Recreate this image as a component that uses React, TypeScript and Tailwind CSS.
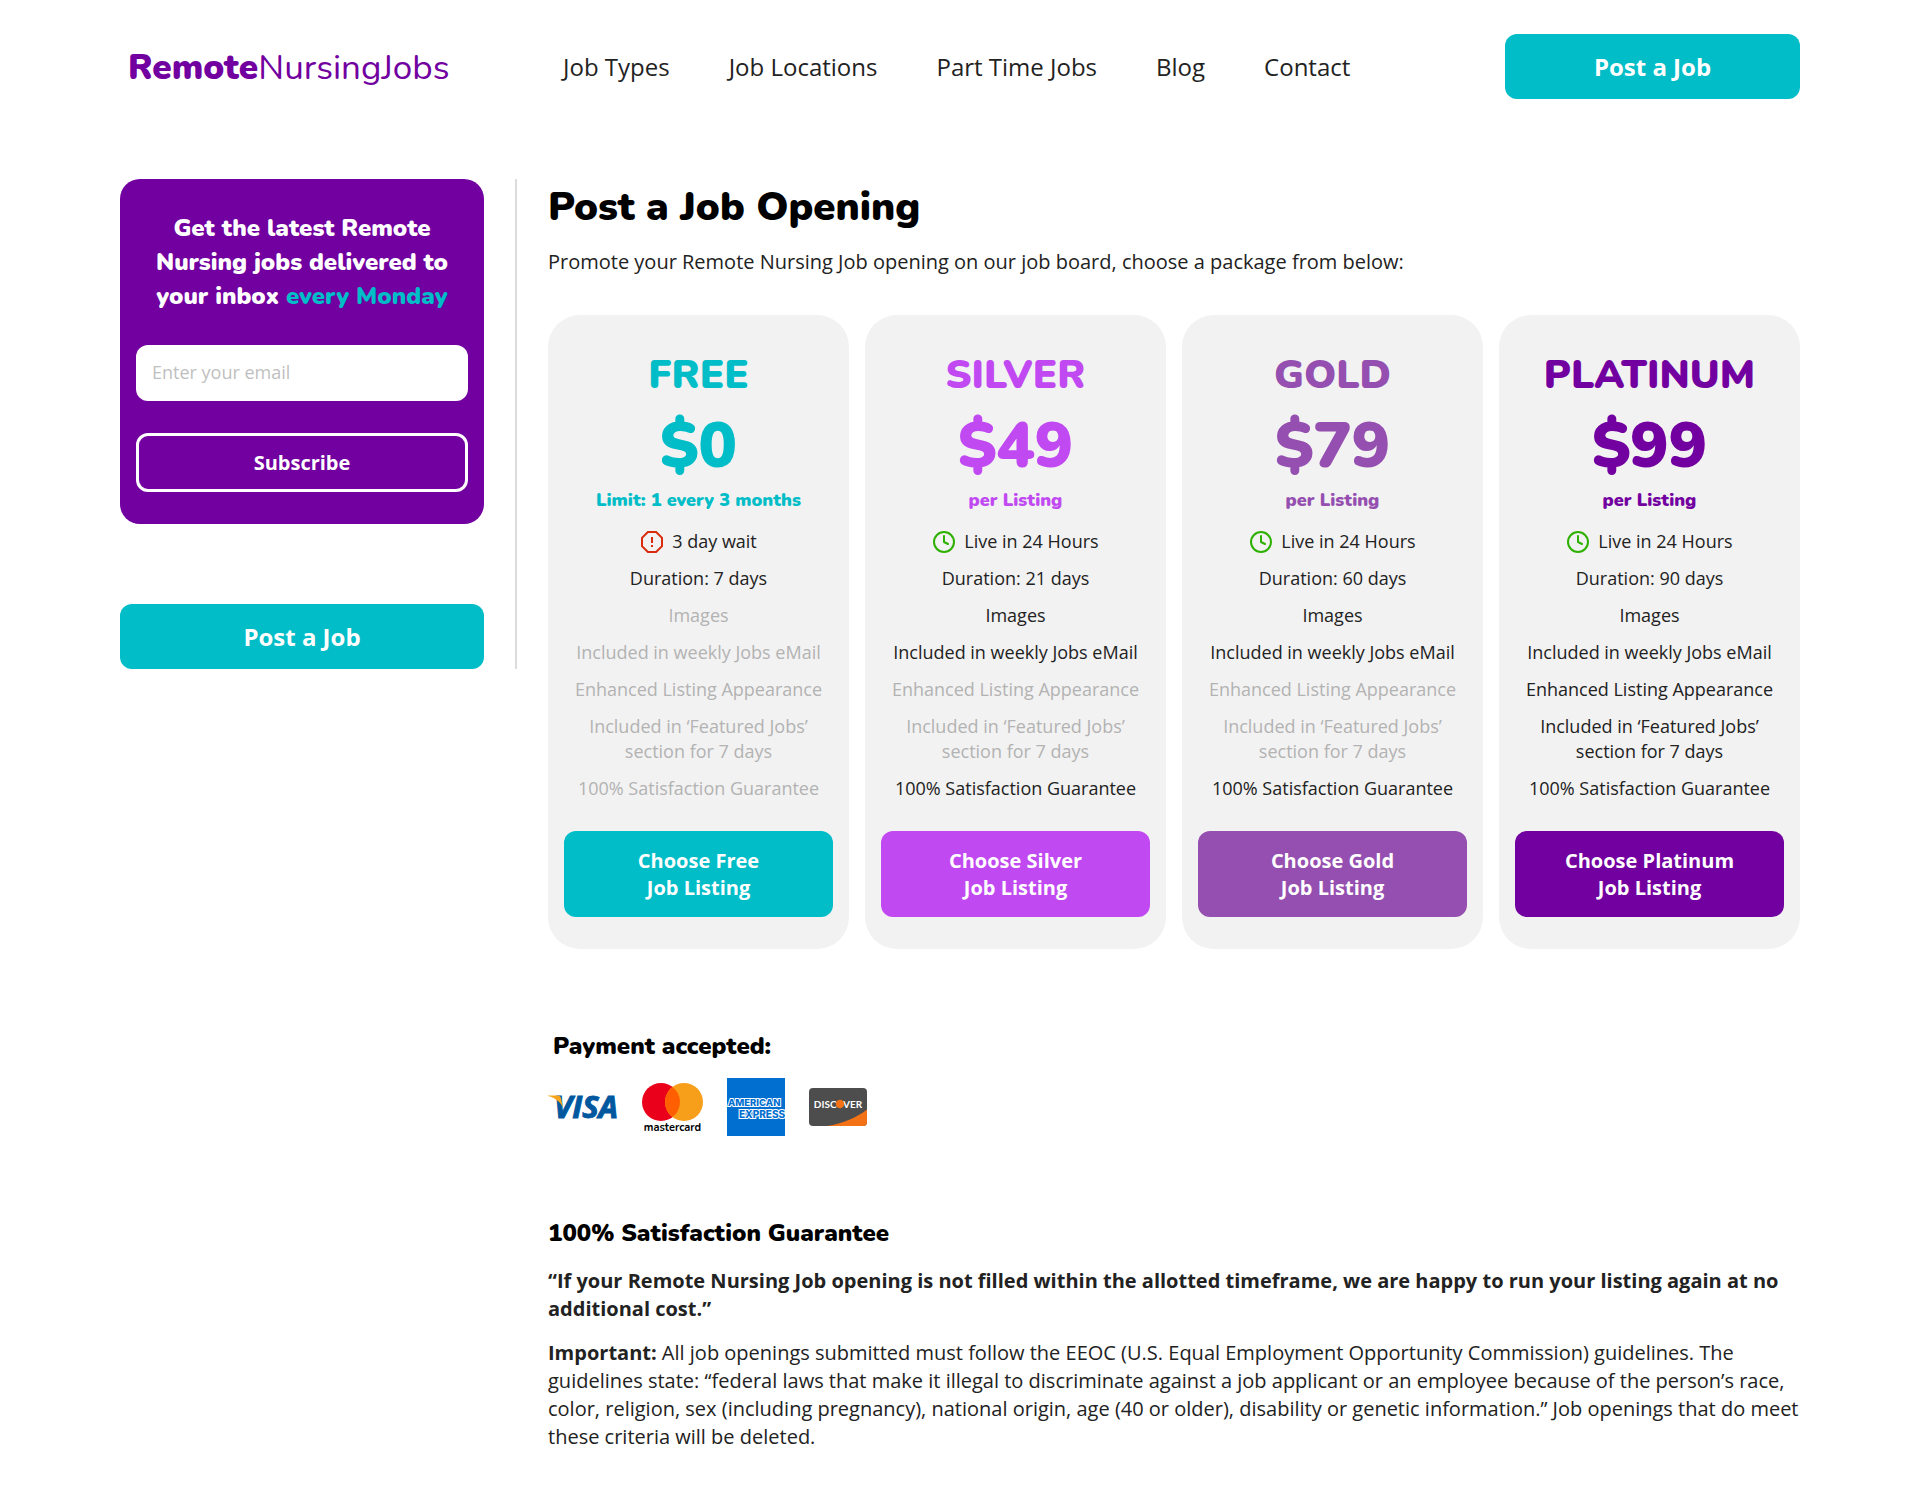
import { Clock } from 'lucide-react';
import clsx from 'clsx';

interface Feature {
  label: string;
  included: boolean;
}

interface Plan {
  name: string;
  price: string;
  note: string;
  wait?: boolean;
  speed: string;
  features: Feature[];
  cta: string;
  textColor: string;
  bgColor: string;
}

const navLinks = ['Job Types', 'Job Locations', 'Part Time Jobs', 'Blog', 'Contact'];

const buildFeatures = (days: number, images: boolean, email: boolean, enhanced: boolean, featured: boolean, guarantee: boolean): Feature[] => [
  { label: `Duration: ${days} days`, included: true },
  { label: 'Images', included: images },
  { label: 'Included in weekly Jobs eMail', included: email },
  { label: 'Enhanced Listing Appearance', included: enhanced },
  { label: 'Included in ‘Featured Jobs’ section for 7 days', included: featured },
  { label: '100% Satisfaction Guarantee', included: guarantee },
];

const plans: Plan[] = [
  {
    name: 'FREE',
    price: '$0',
    note: 'Limit: 1 every 3 months',
    wait: true,
    speed: '3 day wait',
    features: buildFeatures(7, false, false, false, false, false),
    cta: 'Choose Free',
    textColor: 'text-[#00bdc7]',
    bgColor: 'bg-[#00bdc7]',
  },
  {
    name: 'SILVER',
    price: '$49',
    note: 'per Listing',
    speed: 'Live in 24 Hours',
    features: buildFeatures(21, true, true, false, false, true),
    cta: 'Choose Silver',
    textColor: 'text-[#c149f2]',
    bgColor: 'bg-[#c149f2]',
  },
  {
    name: 'GOLD',
    price: '$79',
    note: 'per Listing',
    speed: 'Live in 24 Hours',
    features: buildFeatures(60, true, true, false, false, true),
    cta: 'Choose Gold',
    textColor: 'text-[#954fb0]',
    bgColor: 'bg-[#954fb0]',
  },
  {
    name: 'PLATINUM',
    price: '$99',
    note: 'per Listing',
    speed: 'Live in 24 Hours',
    features: buildFeatures(90, true, true, true, true, true),
    cta: 'Choose Platinum',
    textColor: 'text-[#7200a0]',
    bgColor: 'bg-[#7200a0]',
  },
];

function WaitIcon() {
  return (
    <svg width="24" height="24" viewBox="0 0 24 24" fill="none" stroke="#d92b0b" strokeWidth="2" aria-hidden="true">
      <path d="M7.9 2h8.2L22 7.9v8.2L16.1 22H7.9L2 16.1V7.9z" />
      <path d="M12 7v6M12 15v2" />
    </svg>
  );
}

function PostJobLink() {
  return (
    <a href="#post" className="block rounded-xl bg-[#00bdc7] py-4 text-center text-2xl leading-[33px] font-bold text-white">
      Post a Job
    </a>
  );
}

function PlanCard({ plan }: { plan: Plan }) {
  return (
    <article className="flex flex-col rounded-[32px] bg-[#f2f2f2] px-4 pt-9 pb-8 text-center">
      <div className={clsx('font-[Nunito,sans-serif] font-black', plan.textColor)}>
        <h2 className="text-[40px] leading-[48px]">{plan.name}</h2>
        <p className="mt-[15px] text-[64px] leading-[64px]">{plan.price}</p>
        <p className="mt-[10px] text-lg leading-6">{plan.note}</p>
      </div>
      <ul className="mt-[17px] flex flex-col gap-3 text-lg leading-[25px]">
        <li className="flex items-center justify-center gap-2">
          {plan.wait ? <WaitIcon /> : <Clock className="h-6 w-6 text-[#2eb000]" />}
          {plan.speed}
        </li>
        {plan.features.map((feature) => (
          <li key={feature.label} className={clsx(!feature.included && 'text-[#b3b3b3]')}>
            {feature.label}
          </li>
        ))}
      </ul>
      <a href="#choose" className={clsx('mt-[30px] block rounded-xl py-4 text-xl leading-[27px] font-bold text-white', plan.bgColor)}>
        {plan.cta}
        <br />
        Job Listing
      </a>
    </article>
  );
}

function PaymentLogos() {
  return (
    <div className="mt-4 flex items-center gap-6">
      <svg width="70" height="26" viewBox="0 0 70 26" className="overflow-visible" role="img" aria-label="Visa">
        <text x="6" y="24" fill="#00589f" stroke="#00589f" strokeWidth="1" fontFamily="Open Sans, sans-serif" fontSize="31" fontStyle="italic" fontWeight="700">VISA</text>
        <path d="M0 1.500h9.500c1.800 0 2.900.7 3.400 2.400l2.200 10C12.800 8.500 8 4 0 2z" fill="#f9a51a" />
      </svg>

      <svg width="61" height="50" viewBox="0 0 61 50" className="overflow-visible" role="img" aria-label="Mastercard">
        <circle cx="19" cy="20" r="19" fill="#eb001b" />
        <circle cx="42" cy="20" r="19" fill="#f79e1b" />
        <path d="M30.5 4.900a19 19 0 0 1 0 30.200a19 19 0 0 1 0-30.200z" fill="#ff5f00" />
        <text x="30.5" y="49" textAnchor="middle" fill="#000" fontFamily="Nunito, sans-serif" fontSize="11" fontWeight="700">mastercard</text>
      </svg>

      <svg width="58" height="58" viewBox="0 0 58 58" role="img" aria-label="American Express">
        <rect width="58" height="58" fill="#016fd0" />
        <g fill="#016fd0" stroke="#fff" strokeWidth="2" paintOrder="stroke" fontFamily="Inter, sans-serif" fontWeight="800">
          <text x="1" y="28" fontSize="9.5">AMERICAN</text>
          <text x="12" y="40" fontSize="10">EXPRESS</text>
        </g>
      </svg>

      <svg width="58" height="38" viewBox="0 0 58 38" role="img" aria-label="Discover">
        <defs>
          <clipPath id="discover-card">
            <rect width="58" height="38" rx="4" />
          </clipPath>
        </defs>
        <g clipPath="url(#discover-card)">
          <rect width="58" height="38" fill="#4d4d4d" />
          <path d="M58 21.5C48 29.5 34 35.5 18 38h40z" fill="#f47216" />
        </g>
        <g fill="#fff" fontFamily="Lato, sans-serif" fontSize="10" fontWeight="700">
          <text x="27.5" y="20" textAnchor="end">DISC</text>
          <text x="34" y="20">VER</text>
        </g>
        <circle cx="31" cy="16" r="4.2" fill="#f47216" />
      </svg>
    </div>
  );
}

export default function App() {
  return (
    <div className="min-h-screen bg-white px-[120px] pb-10 font-['Open_Sans',sans-serif] text-[#222]">
      <header className="grid grid-cols-[428px_1fr_295px] items-center pt-[34px]">
        <a href="#home" className="pt-0.5 pl-2 font-[Nunito,sans-serif] text-[35px] leading-[48px] text-[#7200a0]">
          <span className="font-black">Remote</span>NursingJobs
        </a>
        <nav className="flex gap-[59px] pl-[15px] text-2xl leading-8">
          {navLinks.map((link) => (
            <a key={link} href="#nav" className="whitespace-nowrap">
              {link}
            </a>
          ))}
        </nav>
        <PostJobLink />
      </header>

      <div className="mt-20 flex items-start">
        <aside className="w-[397px] shrink-0 border-r-2 border-[#dcdcdc] pr-[31px]">
          <form className="rounded-[20px] bg-[#7200a0] px-4 pt-8 pb-8" onSubmit={(e) => e.preventDefault()}>
            <h2 className="text-center font-[Nunito,sans-serif] text-2xl leading-[34px] font-black text-white">
              Get the latest Remote
              <br />
              Nursing jobs delivered to
              <br />
              your inbox <span className="text-[#00bdc7]">every Monday</span>
            </h2>
            <input
              type="email"
              aria-label="Enter your email"
              placeholder="Enter your email"
              className="mt-8 block h-14 w-full rounded-xl bg-white px-4 pb-0.5 text-lg placeholder:text-[#bfbfbf]"
            />
            <button type="submit" className="mt-8 block w-full rounded-xl border-3 border-white py-[13px] text-xl leading-[27px] font-bold text-white">
              Subscribe
            </button>
          </form>
          <div className="mt-20">
            <PostJobLink />
          </div>
        </aside>

        <main className="flex-1 pt-1 pl-[31px]">
          <h1 className="font-[Nunito,sans-serif] text-[40px] leading-[48px] font-black text-black">Post a Job Opening</h1>
          <p className="mt-[17px] text-xl leading-7">Promote your Remote Nursing Job opening on our job board, choose a package from below:</p>

          <section className="mt-[39px] grid grid-cols-4 gap-4">
            {plans.map((plan) => (
              <PlanCard key={plan.name} plan={plan} />
            ))}
          </section>

          <section className="mt-[81px]">
            <h2 className="pl-[5px] font-[Nunito,sans-serif] text-2xl leading-8 font-black text-black">Payment accepted:</h2>
            <PaymentLogos />
          </section>

          <section className="mt-[81px] text-xl leading-7">
            <h2 className="font-[Nunito,sans-serif] text-2xl leading-8 font-black text-black">100% Satisfaction Guarantee</h2>
            <p className="mt-[18px] font-bold">
              “If your Remote Nursing Job opening is not filled within the allotted timeframe, we are happy to run your listing again at no additional cost.”
            </p>
            <p className="mt-4">
              <strong>Important:</strong> All job openings submitted must follow the EEOC (U.S. Equal Employment Opportunity Commission) guidelines. The
              guidelines state: “federal laws that make it illegal to discriminate against a job applicant or an employee because of the person’s race,
              color, religion, sex (including pregnancy), national origin, age (40 or older), disability or genetic information.” Job openings that do meet
              these criteria will be deleted.
            </p>
          </section>
        </main>
      </div>
    </div>
  );
}
